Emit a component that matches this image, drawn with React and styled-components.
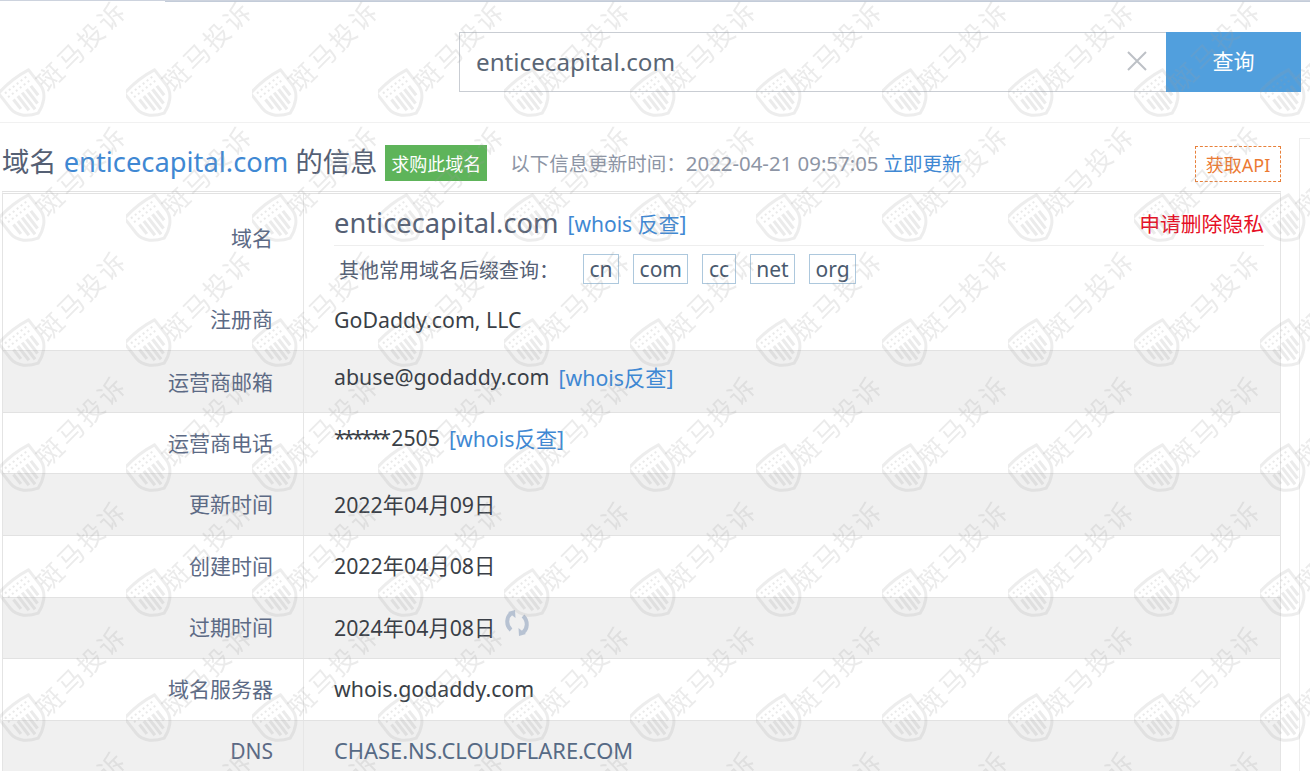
import React from 'react';
import styled, { createGlobalStyle } from 'styled-components';

const GlobalStyle = createGlobalStyle`
  html, body {
    margin: 0;
    height: 771px;
    overflow: hidden;
    background: #fff;
  }
  body {
    font-family: "Noto Sans", "Noto Sans CJK SC", sans-serif;
  }
`;

const Page = styled.div`
  position: relative;
  width: 1310px;
  height: 771px;
  overflow: hidden;
  background: #fff;
`;

const TopLine = styled.div`
  height: 1px;
  border-top: 1px solid #cdd3de;
  background: linear-gradient(to right, #fff 165px, #c3ccd9 165px);
`;

const SearchBar = styled.header`
  display: flex;
  justify-content: flex-end;
  height: 121px;
  box-sizing: border-box;
  padding: 30px 9px 0 0;
  border-bottom: 1px solid #f1f1f1;
`;

const SearchBox = styled.div`
  display: flex;
  align-items: center;
  justify-content: space-between;
  box-sizing: border-box;
  width: 707px;
  height: 60px;
  padding: 0 19px 2px 16px;
  border: 1px solid #c9cdd3;
  border-right: none;
  font-size: 24.2px;
  color: #5a6675;
`;

const SearchButton = styled.button`
  width: 135px;
  height: 60px;
  border: none;
  padding: 0 0 4px;
  background: #519fdd;
  color: #fff;
  font: inherit;
  font-size: 21px;
`;

const Content = styled.div`
  display: flex;
`;

const Main = styled.main`
  flex: none;
  width: 1299px;
`;

const SidePanel = styled.aside`
  flex: 1;
  margin-top: 15px;
  border-left: 1px solid #eee;
  border-top: 1px solid #eee;
`;

const TitleRow = styled.div`
  display: flex;
  align-items: center;
  height: 68px;
  padding: 6px 18px 0 2px;
  box-sizing: border-box;
`;

const Title = styled.h1`
  margin: 0;
  font-size: 27.3px;
  font-weight: 400;
  color: #556074;
  white-space: nowrap;
`;

const Link = styled.a`
  color: #3f88d3;
  text-decoration: none;
`;

const BuyButton = styled.span`
  display: flex;
  align-items: center;
  justify-content: center;
  width: 102px;
  height: 36px;
  margin: 6px 0 0 8px;
  background: #5eb45a;
  color: #fff;
  font-size: 18px;
`;

const UpdateInfo = styled.div`
  margin: 4px 0 0 23px;
  font-size: 19.5px;
  color: #8d95a5;
  white-space: nowrap;
`;

const UpdateTime = styled.span`
  font-size: 20.4px;
`;

const ApiButton = styled.span`
  display: flex;
  align-items: center;
  justify-content: center;
  box-sizing: border-box;
  width: 86px;
  height: 36px;
  margin: 8px 0 0 auto;
  border: 1px dashed #e8803a;
  color: #ec7a32;
  font-size: 18px;
`;

const Table = styled.section`
  width: 1279px;
  margin-left: 2px;
  box-sizing: border-box;
  border: 1px solid #e4e4e4;
  border-top: 3px double #e2e2e2;
`;

const Row = styled.div`
  display: grid;
  grid-template-columns: 301px 1fr;
  height: ${p => p.$height || 61.67}px;
  background: ${p => (p.$shade ? '#f0f0f0' : '#fff')};
  border-bottom: ${p => (p.$plain ? 'none' : '1px solid #e2e2e2')};
  box-sizing: border-box;
`;

const Label = styled.div`
  display: flex;
  align-items: center;
  justify-content: flex-end;
  padding: ${p => p.$top || 0}px 30px ${p => p.$bottom || 0}px 0;
  border-right: 1px solid #e6e6e6;
  font-size: 21px;
  color: #5c6a85;
`;

const Value = styled.div`
  display: flex;
  align-items: center;
  gap: 9px;
  padding: ${p => p.$top || 0}px 16px ${p => p.$bottom || 0}px 30px;
  font-size: 21.3px;
  color: #3a3f47;
  min-width: 0;
`;

const Masked = styled.span`
  letter-spacing: -2.7px;
  margin-right: 3px;
`;

const DomainCell = styled.div`
  padding: 0 16px 0 30px;
`;

const DomainLine = styled.div`
  display: flex;
  align-items: center;
  height: 52px;
  padding-top: 6px;
  box-sizing: border-box;
  border-bottom: 1px solid #eee;
`;

const DomainName = styled.span`
  font-size: 27.3px;
  color: #556074;
`;

const WhoisLink = styled(Link)`
  margin-left: 9px;
  font-size: 21px;
`;

const DeleteLink = styled.a`
  margin-left: auto;
  font-size: 20.8px;
  color: #e60f25;
`;

const SuffixLine = styled.div`
  display: flex;
  align-items: center;
  height: 38px;
  padding: 8px 0 0 5px;
  box-sizing: border-box;
  font-size: 20px;
  color: #556074;
`;

const SuffixList = styled.div`
  display: flex;
  gap: 14px;
  margin-left: 24px;
`;

const Suffix = styled.span`
  box-sizing: border-box;
  display: flex;
  align-items: center;
  justify-content: center;
  height: 30px;
  padding: 0 5.5px;
  border: 1px solid #adc8dd;
  font-size: 21px;
  color: #4a5a6e;
`;

const Nameserver = styled.span`
  font-size: 21.9px;
  color: #566a85;
`;

const Spinner = styled.svg`
  margin: 0 0 8px 0;
`;

const Watermark = styled.svg`
  position: absolute;
  inset: 0;
  width: 1310px;
  height: 771px;
  pointer-events: none;
`;

const WatermarkText = styled.text`
  font-family: "Noto Sans CJK SC", sans-serif;
  font-size: 26px;
  letter-spacing: 2.5px;
  fill: #9a9a9a;
  fill-opacity: 0.2;
`;

const CloseIcon = () => (
  <svg width="20" height="20" viewBox="0 0 20 20" fill="none" stroke="#bdc1c6" strokeWidth="2">
    <path d="M1 1l18 18M19 1L1 19" />
  </svg>
);

const RefreshIcon = () => (
  <Spinner width="26" height="28" viewBox="0 0 26 28" fill="none">
    <path d="M7 4.500C2.500 8 1.500 16 7 21" stroke="#b7c2d2" strokeWidth="4" />
    <path d="M19 23.500c4.500-3.500 5.500-11.500 0-16.500" stroke="#b7c2d2" strokeWidth="4" />
    <path d="M4 3l7-2 .5 8zM22 25l-7 2-.5-8z" fill="#b7c2d2" />
  </Spinner>
);

const WatermarkLayer = () => (
  <Watermark>
    <defs>
      <pattern id="mark" width="126" height="125" patternUnits="userSpaceOnUse">
        <g transform="translate(24 95) rotate(-38)">
          <path
            d="M-19 -17 C-8 -19 8 -19 19 -17 V2 C19 13 9 20 0 23 C-9 20 -19 13 -19 2 Z"
            fill="none"
            stroke="#9a9a9a"
            strokeOpacity="0.18"
            strokeWidth="3"
          />
          <path d="M-14 -13 H14 M-14 -8 H14" fill="none" stroke="#9a9a9a" strokeOpacity="0.22" strokeWidth="2" strokeDasharray="2 3" />
          <path
            d="M-11 -3 V9 M-5.500 -3 V15 M0 -3 V18 M5.500 -3 V15 M11 -3 V9"
            stroke="#9a9a9a"
            strokeOpacity="0.2"
            strokeWidth="3.200"
          />
        </g>
        <WatermarkText transform="translate(48 93) rotate(-45)">斑马投诉</WatermarkText>
      </pattern>
    </defs>
    <rect width="1310" height="771" fill="url(#mark)" />
  </Watermark>
);

const SUFFIXES = ['cn', 'com', 'cc', 'net', 'org'];

export default function App() {
  return (
    <Page>
      <GlobalStyle />
      <TopLine />
      <SearchBar>
        <SearchBox>
          enticecapital.com
          <CloseIcon />
        </SearchBox>
        <SearchButton>查询</SearchButton>
      </SearchBar>

      <Content>
        <Main>
          <TitleRow>
            <Title>
              域名 <Link>enticecapital.com</Link> 的信息
            </Title>
            <BuyButton>求购此域名</BuyButton>
            <UpdateInfo>
              以下信息更新时间{'\uFF1A'}<UpdateTime>2022-04-21 09:57:05</UpdateTime> <Link>立即更新</Link>
            </UpdateInfo>
            <ApiButton>获取API</ApiButton>
          </TitleRow>

          <Table>
            <Row $plain $height={90}>
              <Label $bottom={4}>域名</Label>
              <DomainCell>
                <DomainLine>
                  <DomainName>enticecapital.com</DomainName>
                  <WhoisLink>[whois 反查]</WhoisLink>
                  <DeleteLink>申请删除隐私</DeleteLink>
                </DomainLine>
                <SuffixLine>
                  其他常用域名后缀查询{'\uFF1A'}
                  <SuffixList>
                    {SUFFIXES.map(s => (
                      <Suffix key={s}>{s}</Suffix>
                    ))}
                  </SuffixList>
                </SuffixLine>
              </DomainCell>
            </Row>
            <Row $height={67}>
              <Label $top={2}>注册商</Label>
              <Value $top={4}>GoDaddy.com, LLC</Value>
            </Row>
            <Row $shade>
              <Label>运营商邮箱</Label>
              <Value $bottom={10}>
                abuse@godaddy.com <Link>[whois反查]</Link>
              </Value>
            </Row>
            <Row>
              <Label $bottom={2}>运营商电话</Label>
              <Value $bottom={10}>
                <span>
                  <Masked>******</Masked>2505
                </span>
                <Link>[whois反查]</Link>
              </Value>
            </Row>
            <Row $shade>
              <Label $bottom={3}>更新时间</Label>
              <Value $bottom={2}>2022年04月09日</Value>
            </Row>
            <Row>
              <Label $bottom={3}>创建时间</Label>
              <Value $bottom={3}>2022年04月08日</Value>
            </Row>
            <Row $shade>
              <Label $bottom={3}>过期时间</Label>
              <Value $bottom={2}>
                2024年04月08日
                <RefreshIcon />
              </Value>
            </Row>
            <Row>
              <Label $bottom={3}>域名服务器</Label>
              <Value $bottom={3}>whois.godaddy.com</Value>
            </Row>
            <Row $shade>
              <Label>DNS</Label>
              <Value $bottom={2}>
                <Nameserver>CHASE.NS.CLOUDFLARE.COM</Nameserver>
              </Value>
            </Row>
          </Table>
        </Main>
        <SidePanel />
      </Content>
      <WatermarkLayer />
    </Page>
  );
}
